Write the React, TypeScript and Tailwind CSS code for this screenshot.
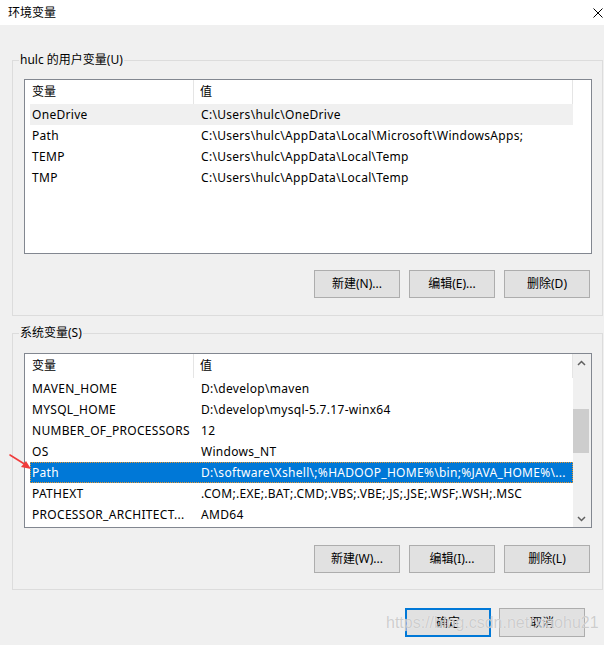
import React from "react";

type Row = [string, string];

const userRows: Row[] = [
    ["OneDrive", "C:\\Users\\hulc\\OneDrive"],
    ["Path", "C:\\Users\\hulc\\AppData\\Local\\Microsoft\\WindowsApps;"],
    ["TEMP", "C:\\Users\\hulc\\AppData\\Local\\Temp"],
    ["TMP", "C:\\Users\\hulc\\AppData\\Local\\Temp"],
];

const sysRows: Row[] = [
    ["MAVEN_HOME", "D:\\develop\\maven"],
    ["MYSQL_HOME", "D:\\develop\\mysql-5.7.17-winx64"],
    ["NUMBER_OF_PROCESSORS", "12"],
    ["OS", "Windows_NT"],
    ["Path", "D:\\software\\Xshell\\;%HADOOP_HOME%\\bin;%JAVA_HOME%\\..."],
    ["PATHEXT", ".COM;.EXE;.BAT;.CMD;.VBS;.VBE;.JS;.JSE;.WSF;.WSH;.MSC"],
    ["PROCESSOR_ARCHITECT...", "AMD64"],
];

function Chevron({ up }: { up?: boolean }) {
    return (
        <svg width="9" height="6" viewBox="0 0 9 6">
            <path
                d={up ? "M1 5 L4.5 1.5 L8 5" : "M1 1 L4.5 4.5 L8 1"}
                fill="none"
                stroke="#606060"
                strokeWidth="1.5"
            />
        </svg>
    );
}

function VarTable({ rows, grey, selected, scroll }: { rows: Row[]; grey?: number; selected?: number; scroll?: boolean }) {
    return (
        <div className="ml-[11px] w-[568px] h-[175px] bg-white border border-[#828790] flex overflow-hidden">
            <div className="w-[548px] pl-[5px] flex flex-col">
                <div className="h-[24px] flex shrink-0 border-r border-[#e5e5e5]">
                    <div className="w-[164px] border-r border-[#e5e5e5] pl-[2px] flex items-center">变量</div>
                    <div className="flex-1 pl-[6px] flex items-center">值</div>
                </div>
                {rows.map((r, i) => (
                    <div
                        key={i}
                        className={`h-[21px] shrink-0 flex items-center ${
                            i === selected
                                ? "bg-[#0078d7] text-white outline-1 outline-dotted outline-[#e8962e] -outline-offset-1"
                                : i === grey
                                    ? "bg-[#f0f0f0]"
                                    : ""
                        }`}
                    >
                        <div className="w-[164px] pl-[2px] whitespace-nowrap overflow-hidden tracking-[0.3px]">{r[0]}</div>
                        <div className="flex-1 pl-[7px] whitespace-nowrap overflow-hidden tracking-[0.3px]">{r[1]}</div>
                    </div>
                ))}
            </div>
            {scroll ? (
                <div className="w-[18px] bg-[#f0f0f0] flex flex-col">
                    <div className="h-[17px] flex items-center justify-center pr-[2px]">
                        <Chevron up />
                    </div>
                    <div className="h-[38px]" />
                    <div className="h-[44px] bg-[#cdcdcd] mr-[2px]" />
                    <div className="flex-1" />
                    <div className="h-[17px] flex items-center justify-center pr-[2px]">
                        <Chevron />
                    </div>
                </div>
            ) : (
                <div className="w-[18px]" />
            )}
        </div>
    );
}

function Btn({ label, primary }: { label: string; primary?: boolean }) {
    return (
        <div
            className={`w-[86px] flex items-center justify-center bg-[#e1e1e1] ${
                primary ? "border-2 border-[#0078d7]" : "border border-[#adadad]"
            }`}
        >
            {label}
        </div>
    );
}

function Group({ title, children, className }: { title: string; children: React.ReactNode; className?: string }) {
    return (
        <div className={`ml-[12px] w-[591px] border border-[#dcdcdc] ${className ?? ""}`}>
            <div className="-mt-[9px] ml-[6px] w-fit px-[1px] bg-[#f0f0f0] leading-[16px]">{title}</div>
            {children}
        </div>
    );
}

export default function App() {
    return (
        <div className="relative w-[604px] h-[645px] bg-[#f0f0f0] text-[12px] text-black font-['Noto_Sans','Noto_Sans_CJK_SC',sans-serif] overflow-hidden">
            <div className="h-[25px] bg-white flex items-center justify-between pl-[8px]">
                <span>环境变量</span>
                <svg width="10" height="10" viewBox="0 0 10 10" className="mr-[1px]">
                    <path d="M0.5 0.5 L9.5 9.5 M9.5 0.5 L0.5 9.5" stroke="#000" strokeWidth="1" />
                </svg>
            </div>

            <Group title="hulc 的用户变量(U)" className="mt-[35px] pb-[17px]">
                <div className="mt-[11px]">
                    <VarTable rows={userRows} grey={0} />
                </div>
                <div className="mt-[16px] h-[28px] flex justify-end gap-[9px] pr-[12px]">
                    <Btn label="新建(N)..." />
                    <Btn label="编辑(E)..." />
                    <Btn label="删除(D)" />
                </div>
            </Group>

            <Group title="系统变量(S)" className="mt-[17px] pb-[16px]">
                <div className="mt-[12px]">
                    <VarTable rows={sysRows} selected={4} scroll />
                </div>
                <div className="mt-[17px] h-[28px] flex justify-end gap-[9px] pr-[12px]">
                    <Btn label="新建(W)..." />
                    <Btn label="编辑(I)..." />
                    <Btn label="删除(L)" />
                </div>
            </Group>

            <div className="mt-[18px] h-[29px] flex justify-end gap-[8px] pr-[19px]">
                <Btn label="确定" primary />
                <Btn label="取消" />
            </div>

            <svg className="absolute left-[8px] top-[453px]" width="26" height="20" viewBox="0 0 26 20">
                <path d="M2 2 L18 12" stroke="#f03c3c" strokeWidth="1.6" strokeLinecap="round" />
                <path d="M23 16 L13 14 L18 8 Z" fill="#f03c3c" />
            </svg>

            <div className="absolute left-[386px] top-[609px] text-[16px] leading-[28px] font-['Liberation_Sans',sans-serif] text-[rgba(190,190,190,0.75)] [text-shadow:0_0_1px_rgba(255,255,255,0.9)] pointer-events-none">
                https://blog.csdn.net/xiaohu21
            </div>
        </div>
    );
}
